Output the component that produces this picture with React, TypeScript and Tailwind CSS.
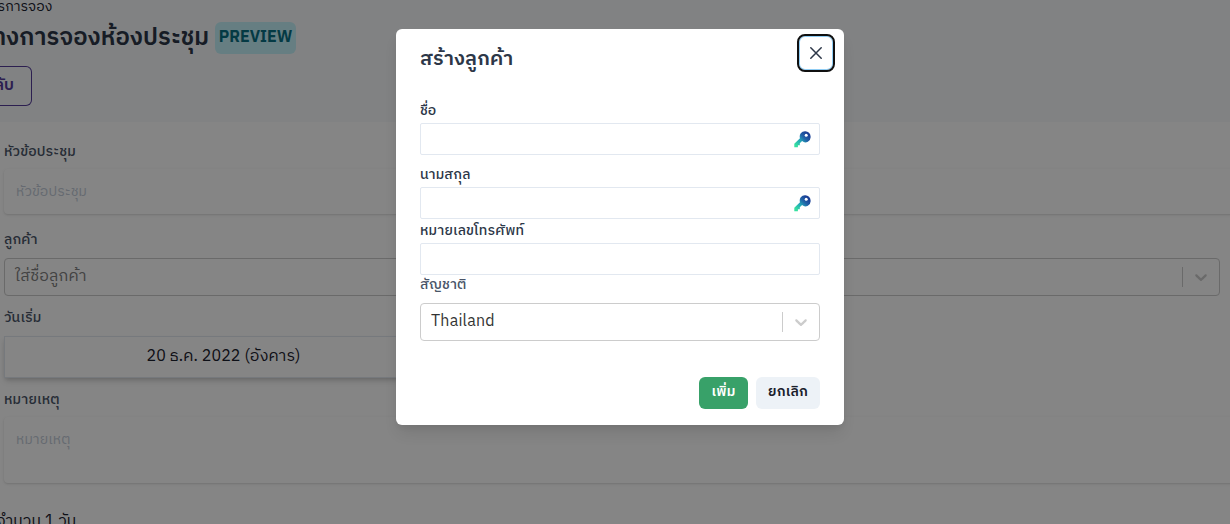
import type { ReactNode } from "react";

const KeyIcon = ({ id }: { id: string }) => (
  <svg width="17" height="17" viewBox="0 0 17 17" fill="none">
    <defs>
      <linearGradient id={id} x1="14" y1="3" x2="1" y2="16" gradientUnits="userSpaceOnUse">
        <stop offset="0" stopColor="#1b3f95" />
        <stop offset="0.3" stopColor="#2164a8" />
        <stop offset="0.55" stopColor="#22a5b8" />
        <stop offset="0.9" stopColor="#35e0a0" />
      </linearGradient>
    </defs>
    <path
      fill={`url(#${id})`}
      d="M11.2.2a5.3 5.3 0 0 0-5.2 7L.3 12.7v3.6h3.6v-2.1h1.9v-2l2.3-2.1a5.2 5.2 0 0 0 8.5-4.5A5.3 5.3 0 0 0 11.2.2Z"
    />
    <circle cx="12.2" cy="4.2" r="1.5" fill="#fff" />
  </svg>
);

const Chevron = () => (
  <svg width="20" height="20" viewBox="0 0 20 20" fill="#cccccc">
    <path d="M4.516 7.548c0.436-0.446 1.043-0.481 1.576 0l3.908 3.747 3.908-3.747c0.533-0.481 1.141-0.446 1.574 0 0.436 0.445 0.408 1.197 0 1.615-0.406 0.418-4.695 4.502-4.695 4.502-0.217 0.223-0.502 0.335-0.787 0.335s-0.57-0.112-0.789-0.335c0 0-4.287-4.084-4.695-4.502s-0.436-1.17 0-1.615z" />
  </svg>
);

const SelectBox = ({ children, className }: { children: ReactNode; className: string }) => (
  <div className={`flex h-[38px] items-center rounded-[4px] border border-[#cccccc] bg-white ${className}`}>
    <div className="flex-1 pl-[10px] text-[16px] leading-[20px] tracking-[0.2px]">{children}</div>
    <div className="h-5 w-px bg-[#cccccc]" />
    <div className="p-2">
      <Chevron />
    </div>
  </div>
);

const Label = ({ children, className }: { children: ReactNode; className: string }) => (
  <div className={`text-[14px] font-medium leading-[20px] tracking-[0.16px] whitespace-nowrap ${className}`}>{children}</div>
);

export default function App() {
  return (
    <div className="relative h-[524px] w-[1230px] overflow-hidden bg-white font-['IBM_Plex_Sans_Thai','Noto_Sans_Thai','Noto_Sans',sans-serif] text-[#1a202c]">
      <header className="h-[122px] bg-[#f7fafc]">
        <div className="flex h-[17px] w-[52.5px] items-end justify-end whitespace-nowrap text-[14px] leading-[20px] tracking-[0.1px]">
          <span>รการจอง</span>
        </div>
        <div className="flex h-[41px] items-center">
          <div className="flex w-[209px] justify-end whitespace-nowrap text-[24px] leading-[32px] font-semibold text-[#2d3748]">
            <span>ตารางการจองห้องประชุม</span>
          </div>
          <div className="ml-[6px] mt-[1px] h-8 w-[81px] rounded-[6px] bg-[#c4f1f9] text-center text-[16px] leading-[31px] font-bold text-[#086f83]">
            PREVIEW
          </div>
        </div>
        <div className="mt-2 flex h-10 w-8 justify-end rounded-r-[6px] border border-l-0 border-[#553c9a] pr-[17px] text-[16px] leading-[37px] font-semibold whitespace-nowrap text-[#553c9a]">
          <span>กลับ</span>
        </div>
      </header>

      <main className="pl-1">
        <Label className="pt-[20px] text-[#4a5568]">หัวข้อประชุม</Label>
        <div className="mt-[7px] h-[45px] w-[1240px] rounded-[4px] px-3 text-[14px] leading-[45px] tracking-[0.12px] text-[#c3ccd8] shadow-[0_1px_3px_rgba(0,0,0,0.1),0_1px_2px_rgba(0,0,0,0.06)]">
          หัวข้อประชุม
        </div>
        <Label className="pt-[16px] text-[#4a5568]">ลูกค้า</Label>
        <SelectBox className="mt-[8px] w-[1216px] text-[#808080]">ใส่ชื่อลูกค้า</SelectBox>
        <Label className="pt-[12px] text-[#4a5568]">วันเริ่ม</Label>
        <div className="mt-[8px] h-[42px] w-[439px] border border-[#e2e8f0] text-center text-[16px] leading-[40px] tracking-[0.1px] shadow-[0_4px_6px_-1px_rgba(0,0,0,0.15),0_2px_4px_-1px_rgba(0,0,0,0.1)]">
          20 ธ.ค. 2022 (อังคาร)
        </div>
        <Label className="pt-[12px] text-[#4a5568]">หมายเหตุ</Label>
        <div className="mt-[7px] h-[66px] w-[1240px] rounded-[4px] px-3 pt-[13px] text-[14px] leading-[20px] tracking-[0.12px] text-[#c3ccd8] shadow-[0_1px_3px_rgba(0,0,0,0.1),0_1px_2px_rgba(0,0,0,0.06)]">
          หมายเหตุ
        </div>
        <div className="-ml-1 mt-[27px] flex w-[76.5px] justify-end text-[16px] leading-[24px] whitespace-nowrap">
          <span>จำนวน 1 วัน</span>
        </div>
      </main>

      <div className="absolute inset-0 flex items-start justify-center bg-black/48 pl-[10px] pt-[29px]">
        <section className="h-[396px] w-[448px] rounded-[6px] bg-white px-6 shadow-[0_10px_15px_-3px_rgba(0,0,0,0.1),0_4px_6px_-2px_rgba(0,0,0,0.05)]">
          <div className="flex h-[72px] justify-between">
            <h2 className="pt-[15px] text-[20px] leading-[32px] font-semibold tracking-[0.15px] whitespace-nowrap text-[#2d3748]">สร้างลูกค้า</h2>
            <button className="-mr-[15px] mt-[5px] flex h-[38px] w-[38px] items-center justify-center rounded-[8px] border-2 border-[#101010] shadow-[inset_0_0_0_1px_#90cdf4]">
              <svg width="12" height="12" viewBox="0 0 12 12" stroke="#2d3748" strokeWidth="1.5" strokeLinecap="round">
                <path d="M.8.8 11.2 11.2M11.2.8.8 11.2" />
              </svg>
            </button>
          </div>
          <Label className="text-[#2d3748]">ชื่อ</Label>
          <div className="mt-[2px] flex h-8 items-center justify-end rounded-[2px] border border-[#e2e8f0] pr-[8px]">
            <KeyIcon id="key-first" />
          </div>
          <Label className="pt-[10px] text-[#2d3748]">นามสกุล</Label>
          <div className="mt-[2px] flex h-8 items-center justify-end rounded-[2px] border border-[#e2e8f0] pr-[8px]">
            <KeyIcon id="key-last" />
          </div>
          <Label className="pt-[2px] text-[#2d3748]">หมายเลขโทรศัพท์</Label>
          <div className="mt-[2px] h-8 rounded-[2px] border border-[#e2e8f0]" />
          <Label className="text-[#4a5568]">สัญชาติ</Label>
          <SelectBox className="mt-[8px] text-[#333333]">Thailand</SelectBox>
          <div className="mt-9 flex justify-end gap-2 text-[14px] leading-[29px] font-semibold tracking-[0.2px] whitespace-nowrap">
            <button className="h-8 w-[49px] rounded-[6px] bg-[#38a169] pb-[3px] text-white">เพิ่ม</button>
            <button className="h-8 w-16 rounded-[6px] bg-[#edf2f7] pb-[3px] text-[#1a202c]">ยกเลิก</button>
          </div>
        </section>
      </div>
    </div>
  );
}
